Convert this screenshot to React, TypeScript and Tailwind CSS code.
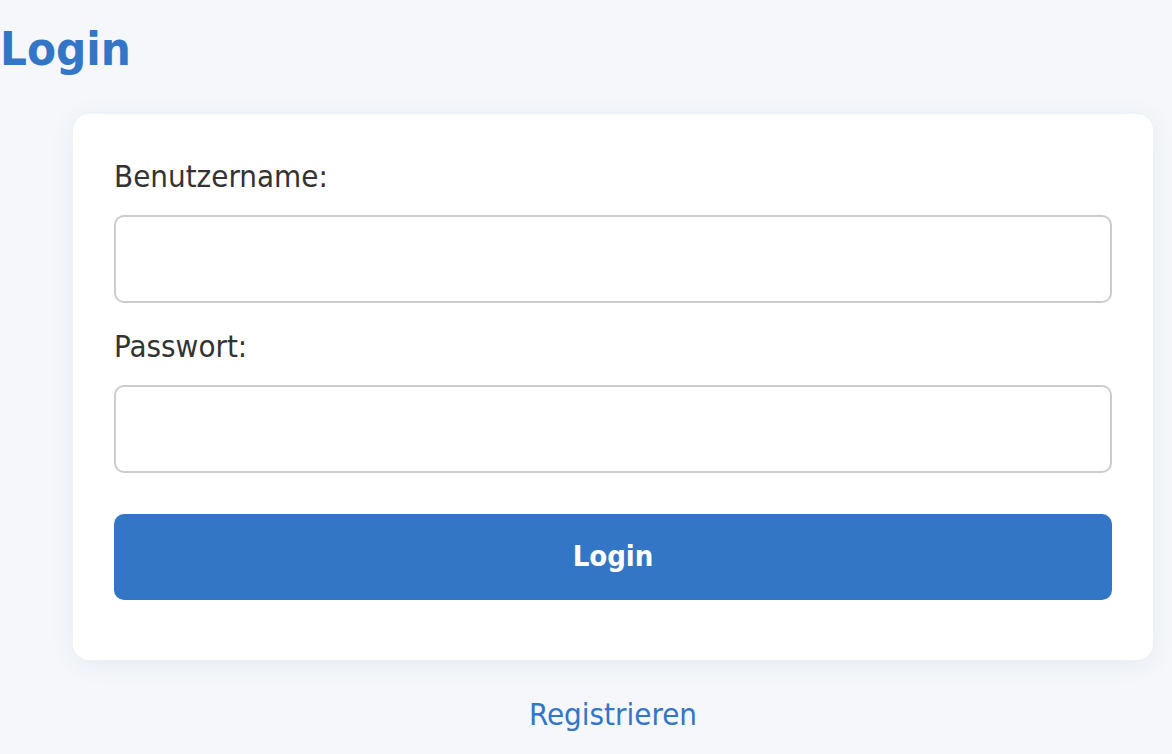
export default function App() {
  return (
    <div className="min-h-screen bg-[#f5f7fa] font-['DejaVu_Sans_Condensed','DejaVu_Sans',sans-serif]">
      <h1 className="pt-[25px] text-[47px] font-bold leading-none text-[#3376c6]">Login</h1>

      {/* Card */}
      <div className="ml-[73px] mr-[19px] mt-[42px] rounded-2xl bg-white px-[41px] pt-[42px] pb-[60px] shadow-[0_4px_24px_rgba(40,80,140,0.08)]">
        <label className="block text-[31px] leading-[40px] text-[#333]">Benutzername:</label>
        <input
          type="text"
          className="mt-[19px] block h-[88px] w-full rounded-[10px] border-2 border-[#ccc] bg-white px-4 text-[29px] outline-none"
        />

        <label className="mt-[23px] block text-[31px] leading-[40px] text-[#333]">Passwort:</label>
        <input
          type="password"
          className="mt-[19px] block h-[88px] w-full rounded-[10px] border-2 border-[#ccc] bg-white px-4 text-[29px] outline-none"
        />

        <button className="mt-[41px] flex h-[86px] w-full items-center justify-center rounded-[10px] bg-[#3376c6] text-[29px] font-bold text-white">
          Login
        </button>
      </div>

      <p className="ml-[73px] mr-[19px] mt-[36px] text-center text-[31px] leading-[36px]">
        <a href="#" className="text-[#3376c6]">Registrieren</a>
      </p>
    </div>
  );
}
